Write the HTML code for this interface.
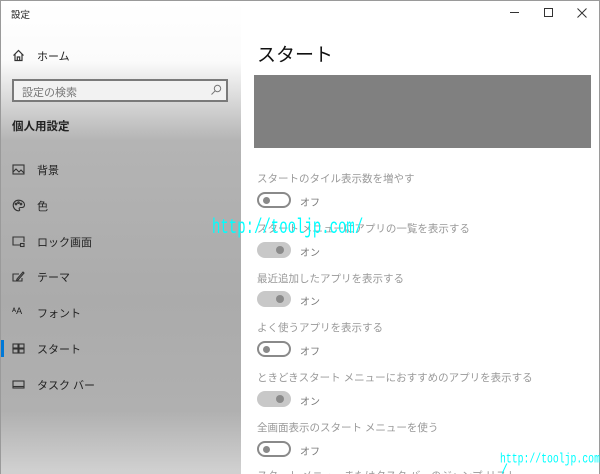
<!DOCTYPE html>
<html><head><meta charset="utf-8"><style>
*{margin:0;padding:0;box-sizing:border-box}
html,body{width:600px;height:474px;overflow:hidden}
body{position:relative;font-family:"Liberation Sans","Noto Sans CJK JP",sans-serif;background:#fff}
#wrap{position:absolute;left:0;top:0;width:600px;height:474px;overflow:hidden}
#win{position:absolute;left:0;top:0;width:600px;height:474px;border:1px solid #9a9a9a;border-bottom:none}
#side{position:absolute;left:1px;top:1px;width:240px;height:473px;background:linear-gradient(#fff 0px,#fbfbfb 60px,#cfcfcf 110px,#b4b4b4 140px,#ababab 300px,#b0b0b0 410px,#d0d0d0 470px)}
.t{position:absolute;font-size:11px;color:#222;white-space:nowrap}
.ic{position:absolute;left:12px;width:13px;height:13px}
.lbl{position:absolute;left:257px;font-size:10.5px;color:#999;white-space:nowrap}
.tg{position:absolute;left:257px;width:34px;height:16px;border-radius:8px}
.off{border:2px solid #8a8a8a;background:#fff}
.off:after{content:"";position:absolute;left:4px;top:3px;width:7px;height:7px;border-radius:50%;background:#8a8a8a}
.on{background:#c8c8c8}
.on:after{content:"";position:absolute;right:7px;top:4px;width:8px;height:8px;border-radius:50%;background:#8a8a8a}
.st{position:absolute;left:300px;font-size:10px;color:#777}
.wm{position:absolute;font-family:"Liberation Mono",monospace;color:#0ff;white-space:nowrap;transform-origin:0 0}
</style></head><body><div id="wrap">
<div id="win"></div>
<div id="side"></div>
<div class="t" style="left:11px;top:7px;font-size:9.5px">設定</div>
<svg class="ic" style="top:49px" viewBox="0 0 13 13" fill="none" stroke="#333" stroke-width="1.2"><path d="M1.5 6.5L6.5 1.5L11.5 6.5M3 5v6.5h7V5M5.3 11.5V8h2.4v3.5"/></svg>
<div class="t" style="left:37px;top:48px">ホーム</div>
<div style="position:absolute;left:12px;top:79px;width:216px;height:23px;border:2px solid #7a7a7a;background:#f2f2f2"></div>
<div class="t" style="left:22px;top:84px;color:#777">設定の検索</div>
<svg style="position:absolute;left:210px;top:84px" width="12" height="12" viewBox="0 0 12 12" fill="none" stroke="#777" stroke-width="1"><circle cx="7.5" cy="4.5" r="3.2"/><path d="M5.2 6.8L1.5 10.5"/></svg>
<div class="t" style="left:12px;top:118px;font-weight:bold;font-size:11.5px">個人用設定</div>
<svg class="ic" style="top:163px" viewBox="0 0 13 13" fill="none" stroke="#333" stroke-width="1.1"><rect x="1" y="2" width="11" height="9"/><path d="M1 9l3-3 3 3 2-2 3 3"/></svg>
<div class="t" style="left:37px;top:162px">背景</div>
<svg class="ic" style="top:199px" viewBox="0 0 13 13" fill="none" stroke="#333" stroke-width="1.1"><path d="M6.5 1.2C3.5 1.2 1.2 3.5 1.2 6.3c0 3 2.6 5.5 5.5 5.5 1 0 1.2-.8.7-1.5-.6-.9 0-1.8 1-1.8h1.5c1.5 0 2.600-1 2.600-2.600 0-2.600-2.600-4.700-6-4.700z"/><circle cx="4" cy="5" r=".8"/><circle cx="6.5" cy="3.6" r=".8"/><circle cx="9" cy="5" r=".8"/></svg>
<div class="t" style="left:37px;top:198px">色</div>
<svg class="ic" style="top:235px" viewBox="0 0 13 13" fill="none" stroke="#333" stroke-width="1.1"><path d="M8 10H1V2h11v5"/><rect x="8.5" y="8.5" width="3.5" height="3"/></svg>
<div class="t" style="left:37px;top:234px">ロック画面</div>
<svg class="ic" style="top:270px" viewBox="0 0 13 13" fill="none" stroke="#333" stroke-width="1.1"><path d="M7 4H1v7h9V8M5 9l6-7 1 1-6 7-1.5.5z"/></svg>
<div class="t" style="left:37px;top:269px">テーマ</div>
<div class="t" style="left:12px;top:306px;font-size:9px">ᴬA</div>
<div class="t" style="left:37px;top:305px">フォント</div>
<div style="position:absolute;left:1px;top:340px;width:3px;height:17px;background:#0078d7"></div>
<svg class="ic" style="top:342px" viewBox="0 0 13 13" fill="none" stroke="#333" stroke-width="1.1"><rect x="1" y="2" width="5" height="4"/><rect x="7" y="2" width="5" height="4"/><rect x="1" y="7" width="5" height="4"/><rect x="7" y="7" width="5" height="4"/></svg>
<div class="t" style="left:37px;top:341px">スタート</div>
<svg class="ic" style="top:378px" viewBox="0 0 13 13" fill="none" stroke="#333" stroke-width="1.1"><rect x="1" y="3" width="11" height="7"/><path d="M1 8.5h11"/></svg>
<div class="t" style="left:37px;top:377px">タスク バー</div>

<div style="position:absolute;left:510px;top:12px;width:9px;height:1px;background:#333"></div>
<div style="position:absolute;left:544px;top:8px;width:9px;height:9px;border:1px solid #333"></div>
<svg style="position:absolute;left:577px;top:8px" width="10" height="10" viewBox="0 0 10 10" stroke="#333" stroke-width="1"><path d="M0.5 0.5l9 9M9.5 0.5l-9 9"/></svg>
<div class="t" style="left:257px;top:40px;font-size:19px;color:#111">スタート</div>
<div style="position:absolute;left:254px;top:75px;width:337px;height:73px;background:#808080"></div>

<div class="lbl" style="top:171px">スタートのタイル表示数を増やす</div>
<div class="tg off" style="top:192px"></div><div class="st" style="top:194px">オフ</div>
<div class="lbl" style="top:221px">スタート メニューにアプリの一覧を表示する</div>
<div class="tg on" style="top:242px"></div><div class="st" style="top:244px">オン</div>
<div class="lbl" style="top:271px">最近追加したアプリを表示する</div>
<div class="tg on" style="top:291px"></div><div class="st" style="top:293px">オン</div>
<div class="lbl" style="top:320px">よく使うアプリを表示する</div>
<div class="tg off" style="top:341px"></div><div class="st" style="top:343px">オフ</div>
<div class="lbl" style="top:370px">ときどきスタート メニューにおすすめのアプリを表示する</div>
<div class="tg on" style="top:391px"></div><div class="st" style="top:393px">オン</div>
<div class="lbl" style="top:420px">全画面表示のスタート メニューを使う</div>
<div class="tg off" style="top:441px"></div><div class="st" style="top:443px">オフ</div>
<div class="lbl" style="top:468px;width:335px;overflow:hidden">スタート メニューまたはタスク バーのジャンプ リスト</div>

<div class="wm" style="left:212px;top:216px;font-size:14px;transform:scaleY(1.55)">http://tooljp.com/</div>
<div class="wm" style="left:500px;top:451px;font-size:9.8px;transform:scaleY(1.45)">http://tooljp.com</div>
<div style="position:absolute;left:504px;top:463px;width:1px;height:11px;background:#0ff;transform:rotate(25deg)"></div>
</div></body></html>
